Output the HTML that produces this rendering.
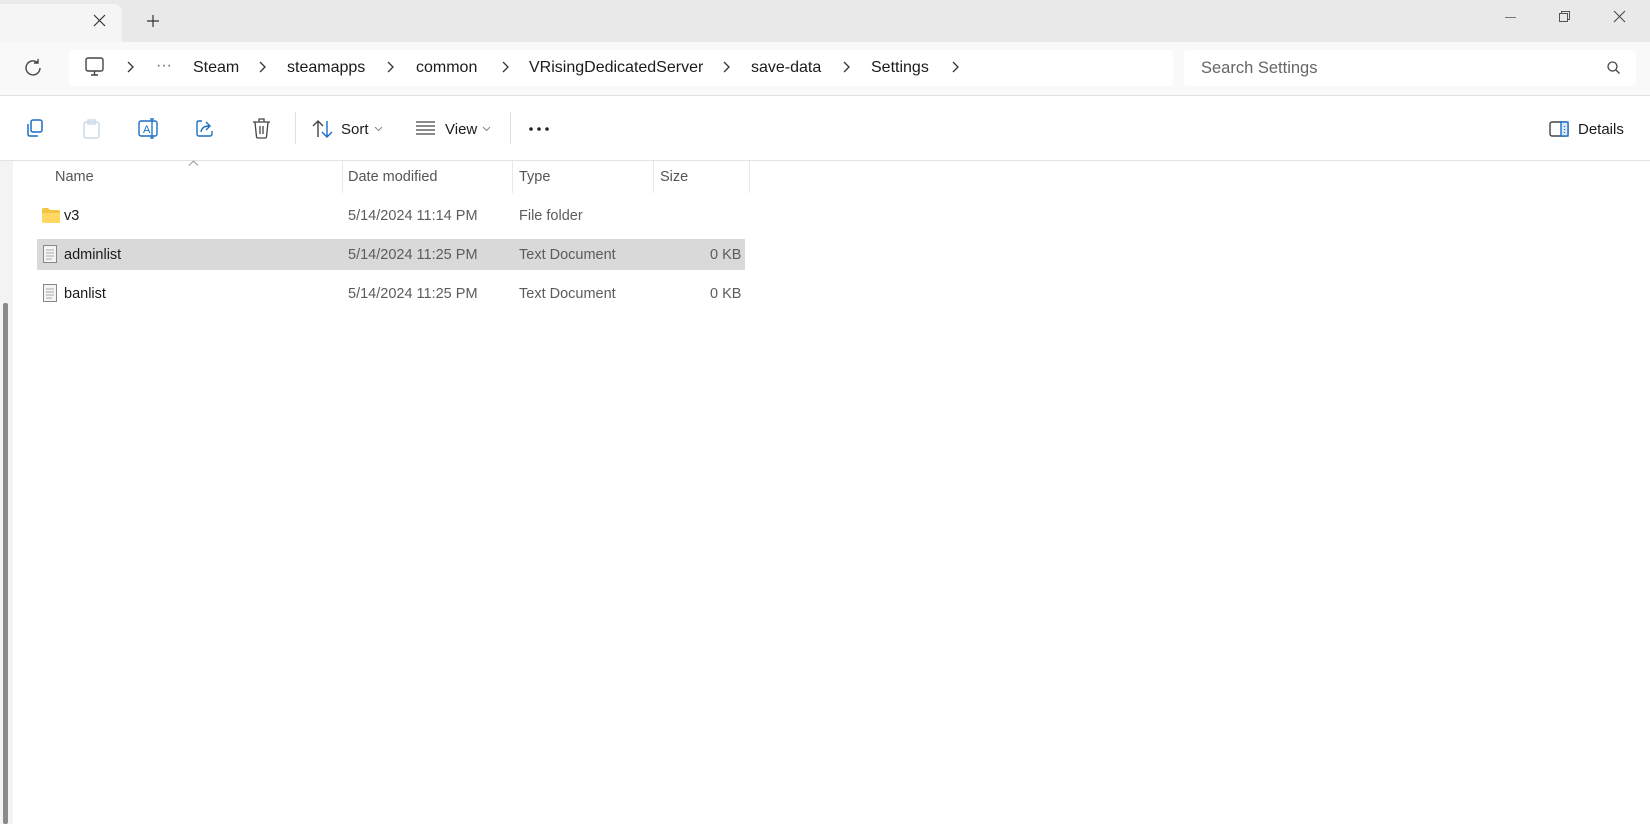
<!DOCTYPE html>
<html><head><meta charset="utf-8"><style>
*{box-sizing:border-box;margin:0;padding:0}
body{width:1650px;height:824px;overflow:hidden;background:#fff;font-family:"Liberation Sans",sans-serif;position:relative;color:#1b1b1b}
.a{position:absolute}
.t{position:absolute;white-space:nowrap}
svg{position:absolute;overflow:visible}
</style></head><body>
<!-- title bar -->
<div class="a" style="left:0;top:0;width:1650px;height:42px;background:#e9e9e9"></div>
<div class="a" style="left:0;top:4px;width:122px;height:38px;background:#f5f5f5;border-radius:0 8px 0 0"></div>
<svg style="left:94px;top:15px" width="11" height="11"><path d="M0 0L11 11M11 0L0 11" stroke="#333" stroke-width="1.2"/></svg>
<svg style="left:147px;top:15px" width="12" height="12"><path d="M6 0V12M0 6H12" stroke="#333" stroke-width="1.2"/></svg>
<div class="a" style="left:1505px;top:17px;width:11px;height:1px;background:#777"></div>
<svg style="left:1559px;top:11px" width="12" height="12"><rect x="0.5" y="2.5" width="8" height="8" fill="none" stroke="#555"/><path d="M2.5 2.5V0.5H10.5V8.5H8.5" fill="none" stroke="#555"/></svg>
<svg style="left:1614px;top:11px" width="11" height="11"><path d="M0 0L11 11M11 0L0 11" stroke="#444" stroke-width="1"/></svg>
<!-- address row -->
<div class="a" style="left:0;top:42px;width:1650px;height:54px;background:#f9f9f9"></div>
<svg style="left:24px;top:59px" width="18" height="18"><path d="M14 4A7 7 0 1 0 16 9" fill="none" stroke="#444" stroke-width="1.4"/><path d="M14 0V4H10" fill="none" stroke="#444" stroke-width="1.4"/></svg>
<div class="a" style="left:69px;top:50px;width:1104px;height:36px;background:#fff;border-radius:4px"></div>
<svg style="left:85px;top:57px" width="20" height="20"><rect x="1" y="1" width="17" height="13" rx="2" fill="none" stroke="#444" stroke-width="1.4"/><path d="M6 18H13M9.5 14V18" stroke="#444" stroke-width="1.4"/></svg>
<svg style="left:0;top:0" width="1" height="1">
<g fill="none" stroke="#333" stroke-width="1.3">
<path d="M128 62L133 67L128 72"/>
<path d="M260 62L265 67L260 72"/>
<path d="M388 62L393 67L388 72"/>
<path d="M503 62L508 67L503 72"/>
<path d="M724 62L729 67L724 72"/>
<path d="M844 62L849 67L844 72"/>
<path d="M953 62L958 67L953 72"/>
</g></svg>
<div style="font-size:16px;color:#1b1b1b">
<div class="t" style="left:156px;top:57px;color:#666">···</div>
<div class="t" style="left:193px;top:59px">Steam</div>
<div class="t" style="left:287px;top:59px">steamapps</div>
<div class="t" style="left:416px;top:59px">common</div>
<div class="t" style="left:529px;top:59px">VRisingDedicatedServer</div>
<div class="t" style="left:751px;top:59px">save-data</div>
<div class="t" style="left:871px;top:59px">Settings</div>
</div>
<div class="a" style="left:1184px;top:50px;width:452px;height:36px;background:#fff;border-radius:4px"></div>
<div class="t" style="left:1201px;top:59px;font-size:16.5px;color:#666">Search Settings</div>
<svg style="left:1607px;top:61px" width="13" height="13"><circle cx="5.5" cy="5.5" r="4.5" fill="none" stroke="#444" stroke-width="1.3"/><path d="M9 9L12.5 12.5" stroke="#444" stroke-width="1.3"/></svg>
<div class="a" style="left:0;top:95px;width:1650px;height:1px;background:#e0e0e0"></div>
<!-- toolbar -->
<svg style="left:25px;top:119px" width="20" height="20"><rect x="6" y="1" width="11" height="12" rx="2" fill="none" stroke="#1a6fc4" stroke-width="1.5"/><path d="M3 5V15Q3 17 5 17H13" fill="none" stroke="#1a6fc4" stroke-width="1.5"/></svg>
<svg style="left:83px;top:119px" width="18" height="20"><rect x="1" y="3" width="15" height="16" rx="2" fill="none" stroke="#c8d8e6" stroke-width="1.4"/><rect x="5" y="1" width="7" height="4" fill="none" stroke="#c8d8e6" stroke-width="1.4"/></svg>
<svg style="left:138px;top:118px" width="22" height="22"><rect x="1" y="3" width="18" height="15" rx="2" fill="none" stroke="#1a6fc4" stroke-width="1.4"/><text x="5" y="15" font-size="11" font-family="Liberation Sans" fill="#1a6fc4">A</text><path d="M14 1V20M12 1H16M12 20H16" stroke="#1a6fc4" stroke-width="1.3"/></svg>
<svg style="left:195px;top:119px" width="20" height="20"><path d="M7 2H4Q2 2 2 4V15Q2 17 4 17H15Q17 17 17 15V12" fill="none" stroke="#1a6fc4" stroke-width="1.4"/><path d="M6 13Q7 7 14 7M11 3L15 7L11 11" fill="none" stroke="#1a6fc4" stroke-width="1.4"/></svg>
<svg style="left:252px;top:118px" width="20" height="22"><path d="M1 4H18M7 4V1H12V4M3 4L4.5 19Q4.7 20 6 20H13Q14.3 20 14.5 19L16 4M8 8V16M11 8V16" fill="none" stroke="#444" stroke-width="1.3"/></svg>
<div class="a" style="left:295px;top:112px;width:1px;height:32px;background:#e0e0e0"></div>
<svg style="left:312px;top:119px" width="22" height="20"><path d="M6 18V2M1 7L6 2L11 7" fill="none" stroke="#444" stroke-width="1.4"/><path d="M15 2V18M10 13L15 18L20 13" fill="none" stroke="#1a6fc4" stroke-width="1.4"/></svg>
<div class="t" style="left:341px;top:121px;font-size:15px">Sort</div>
<svg style="left:375px;top:127px" width="7" height="4"><path d="M0 0L3.5 3.5L7 0" fill="none" stroke="#888"/></svg>
<svg style="left:416px;top:121px" width="20" height="14"><path d="M0 1H19M0 5H19M0 9H19M0 13H19" stroke="#444" stroke-width="1.2"/></svg>
<div class="t" style="left:445px;top:121px;font-size:15px">View</div>
<svg style="left:483px;top:127px" width="7" height="4"><path d="M0 0L3.5 3.5L7 0" fill="none" stroke="#888"/></svg>
<div class="a" style="left:510px;top:112px;width:1px;height:32px;background:#e0e0e0"></div>
<svg style="left:529px;top:127px" width="22" height="4"><circle cx="2" cy="2" r="1.8" fill="#222"/><circle cx="10" cy="2" r="1.8" fill="#222"/><circle cx="18" cy="2" r="1.8" fill="#222"/></svg>
<svg style="left:1549px;top:121px" width="20" height="16"><rect x="1" y="1" width="18" height="14" rx="2" fill="none" stroke="#444" stroke-width="1.4"/><rect x="12" y="1" width="7" height="14" fill="#dbe9f7" stroke="#1a6fc4" stroke-width="1.4"/><path d="M15.5 5V6M15.5 8V9M15.5 11V12" stroke="#1a6fc4" stroke-width="1.3"/></svg>
<div class="t" style="left:1578px;top:121px;font-size:15px">Details</div>
<div class="a" style="left:0;top:160px;width:1650px;height:1px;background:#e3e3e3"></div>
<!-- left pane -->
<div class="a" style="left:0;top:161px;width:13px;height:663px;background:#f3f3f3"></div>
<div class="a" style="left:3px;top:303px;width:5px;height:521px;background:#8a8a8a;border-radius:2px"></div>
<!-- header -->
<svg style="left:189px;top:161px" width="9" height="5"><path d="M0 4.5L4.5 0L9 4.5" fill="none" stroke="#999"/></svg>
<div style="font-size:14.5px;color:#555">
<div class="t" style="left:55px;top:169px">Name</div>
<div class="t" style="left:348px;top:169px">Date modified</div>
<div class="t" style="left:519px;top:169px">Type</div>
<div class="t" style="left:660px;top:169px">Size</div>
</div>
<div class="a" style="left:342px;top:161px;width:1px;height:32px;background:#e8e8e8"></div>
<div class="a" style="left:512px;top:161px;width:1px;height:32px;background:#e8e8e8"></div>
<div class="a" style="left:653px;top:161px;width:1px;height:32px;background:#e8e8e8"></div>
<div class="a" style="left:749px;top:161px;width:1px;height:32px;background:#e8e8e8"></div>
<!-- rows -->
<div class="a" style="left:37px;top:239px;width:708px;height:31px;background:#d9d9d9"></div>
<svg style="left:42px;top:208px" width="18" height="15"><path d="M0 2Q0 0 2 0H6L8 2H16Q18 2 18 4V13Q18 15 16 15H2Q0 15 0 13Z" fill="#f4c542"/><path d="M0 5H18V13Q18 15 16 15H2Q0 15 0 13Z" fill="#ffd762"/></svg>
<svg style="left:43px;top:245px" width="14" height="18"><rect x="0.5" y="0.5" width="13" height="17" fill="#f4f4f4" stroke="#888"/><path d="M3 5H11M3 8H11M3 11H11M3 14H9" stroke="#aaa"/></svg>
<svg style="left:43px;top:284px" width="14" height="18"><rect x="0.5" y="0.5" width="13" height="17" fill="#f4f4f4" stroke="#888"/><path d="M3 5H11M3 8H11M3 11H11M3 14H9" stroke="#aaa"/></svg>
<div style="font-size:14.5px">
<div class="t" style="left:64px;top:208px">v3</div>
<div class="t" style="left:64px;top:247px">adminlist</div>
<div class="t" style="left:64px;top:286px">banlist</div>
</div>
<div style="font-size:14.5px;color:#5c5c5c">
<div class="t" style="left:348px;top:208px">5/14/2024 11:14 PM</div>
<div class="t" style="left:519px;top:208px">File folder</div>
<div class="t" style="left:348px;top:247px">5/14/2024 11:25 PM</div>
<div class="t" style="left:519px;top:247px">Text Document</div>
<div class="t" style="left:710px;top:247px">0 KB</div>
<div class="t" style="left:348px;top:286px">5/14/2024 11:25 PM</div>
<div class="t" style="left:519px;top:286px">Text Document</div>
<div class="t" style="left:710px;top:286px">0 KB</div>
</div>
</body></html>
